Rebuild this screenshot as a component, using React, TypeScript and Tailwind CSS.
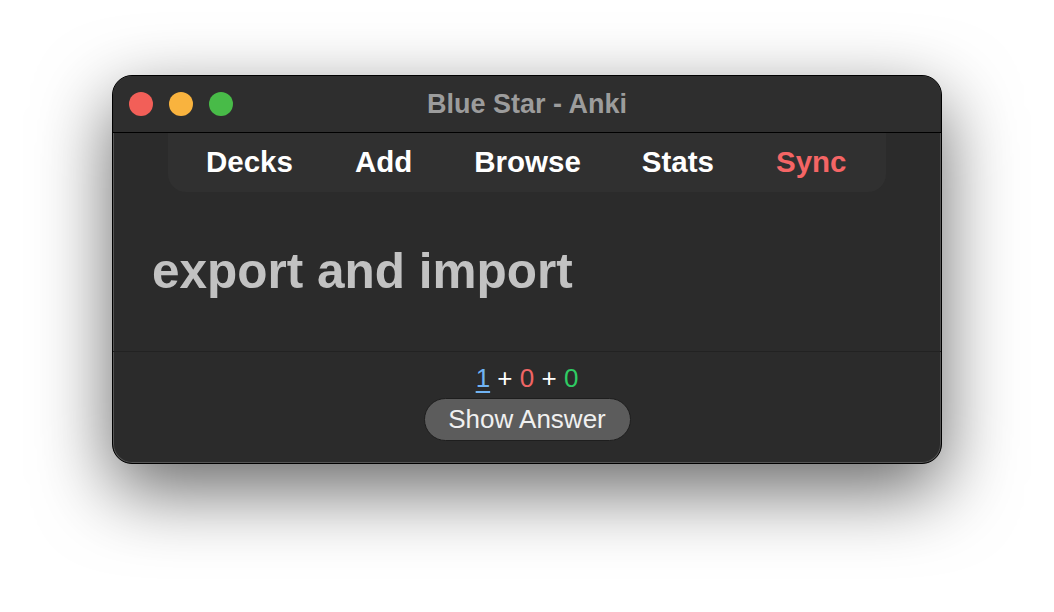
const Light = ({ color }: { color: string }) => (
  <span className={`block w-6 h-6 rounded-full ${color}`} />
);

export default function App() {
  return (
    <div className="w-[1054px] h-[612px] bg-white pt-[75px] pl-[112px] font-['Liberation_Sans',Arial,sans-serif]">
      <div className="w-[830px] h-[389px] rounded-[20px] border border-black bg-[#2b2b2b] shadow-[0_26px_75px_rgba(0,0,0,0.6)] overflow-hidden flex flex-col ring-1 ring-inset ring-[#555]">
        {/* title bar */}
        <div className="relative h-[57px] shrink-0 bg-[#2e2e2e] border-b border-black flex items-center pl-[16px]">
          <div className="flex gap-4">
            <Light color="bg-[#f25f58]" />
            <Light color="bg-[#f9b33e]" />
            <Light color="bg-[#48bb48]" />
          </div>
          <div className="absolute inset-0 flex items-center justify-center text-[27px] font-bold text-[#9c9c9c] pointer-events-none">
            Blue Star - Anki
          </div>
        </div>

        {/* toolbar */}
        <div className="flex pl-[55px]">
          <nav className="w-[718px] h-[59px] bg-[#303030] rounded-b-[18px] flex items-center text-[29.5px] font-bold text-white">
            <span className="ml-[38px]">Decks</span>
            <span className="ml-[62px]">Add</span>
            <span className="ml-[62px]">Browse</span>
            <span className="ml-[61px]">Stats</span>
            <span className="ml-[62px] text-[#f56565]">Sync</span>
          </nav>
        </div>

        {/* card */}
        <div className="flex-1 px-[39px] pt-[54px]">
          <h1 className="text-[49.5px] leading-none font-bold text-[#c2c2c2]">
            export and import
          </h1>
        </div>

        {/* bottom bar */}
        <div className="h-[112px] shrink-0 border-t border-[#222] flex flex-col items-center pt-[12px]">
          <div className="text-[26px] leading-[28px] text-white">
            <span className="text-[#70b3f3] underline underline-offset-4">1</span>
            <span> + </span>
            <span className="text-[#f06565]">0</span>
            <span> + </span>
            <span className="text-[#2fcc63]">0</span>
          </div>
          <button className="mt-[6px] w-[207px] h-[43px] rounded-full bg-[#5c5c5c] border border-[#1e1e1e] text-[26px] text-[#f0f0f0]">
            Show Answer
          </button>
        </div>
      </div>
    </div>
  );
}
